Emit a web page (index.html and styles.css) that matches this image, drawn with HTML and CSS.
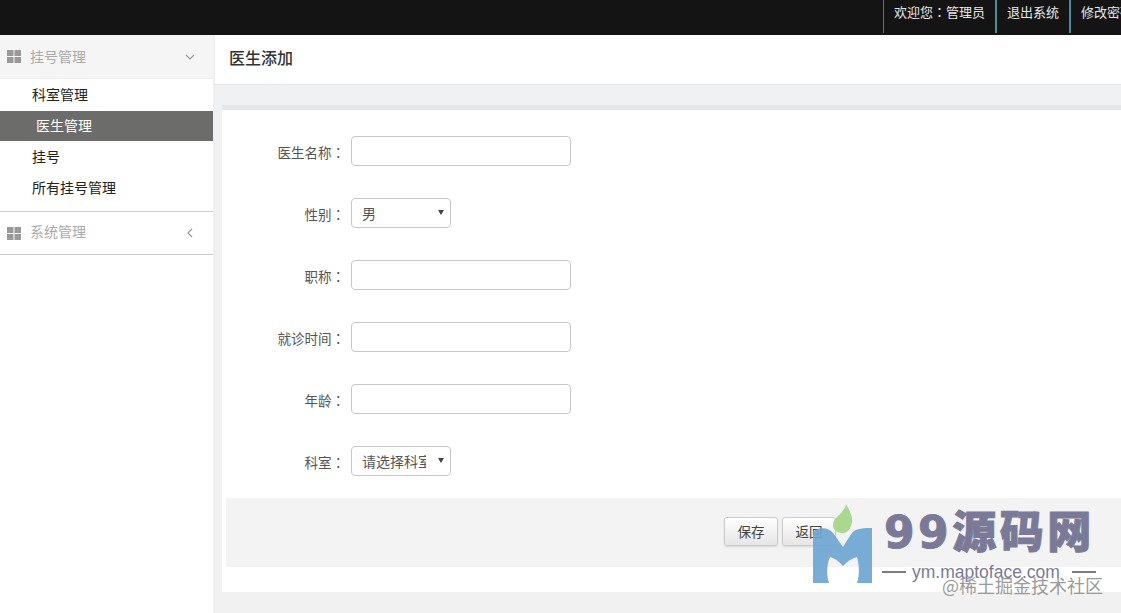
FILE: index.html
```html
<!DOCTYPE html>
<html lang="zh-CN">
<head>
<meta charset="utf-8">
<title>医生添加</title>
<link rel="stylesheet" href="styles.css">
</head>
<body>
<header class="topbar">
  <nav class="topnav">
    <a class="topnav-item">欢迎您<span class="colon" lang="zh-Hant">：</span>管理员</a>
    <a class="topnav-item topnav-item-thick">退出系统</a>
    <a class="topnav-item topnav-item-thick">修改密码</a>
  </nav>
</header>
<div class="layout">
  <aside class="sidebar">
    <div class="group-head group-head-open">
      <svg class="grid-icon" viewBox="0 0 14 13"><path d="M0 0h6.500v6H0zM7.500 0H14v6H7.500zM0 7h6.500v6H0zM7.500 7H14v6H7.500z"/></svg>
      <span class="group-title">挂号管理</span>
      <svg class="chev" viewBox="0 0 10 10"><path d="M1 3l4 4 4-4"/></svg>
    </div>
    <ul class="menu">
      <li class="menu-item">科室管理</li>
      <li class="menu-item menu-item-active">医生管理</li>
      <li class="menu-item">挂号</li>
      <li class="menu-item">所有挂号管理</li>
    </ul>
    <div class="group-head group-head-closed">
      <svg class="grid-icon" viewBox="0 0 14 13"><path d="M0 0h6.500v6H0zM7.500 0H14v6H7.500zM0 7h6.500v6H0zM7.500 7H14v6H7.500z"/></svg>
      <span class="group-title">系统管理</span>
      <svg class="chev" viewBox="0 0 10 10"><path d="M7 1L3 5l4 4"/></svg>
    </div>
  </aside>
  <main class="content">
    <h1 class="page-title">医生添加</h1>
    <div class="band"></div>
    <section class="panel">
      <form class="form">
        <div class="row"><label class="label">医生名称<span class="colon" lang="zh-Hant">：</span></label><input class="input" type="text"></div>
        <div class="row"><label class="label">性别<span class="colon" lang="zh-Hant">：</span></label><div class="select-wrap"><select class="select"><option>男</option><option>女</option></select></div></div>
        <div class="row"><label class="label">职称<span class="colon" lang="zh-Hant">：</span></label><input class="input" type="text"></div>
        <div class="row"><label class="label">就诊时间<span class="colon" lang="zh-Hant">：</span></label><input class="input" type="text"></div>
        <div class="row"><label class="label">年龄<span class="colon" lang="zh-Hant">：</span></label><input class="input" type="text"></div>
        <div class="row"><label class="label">科室<span class="colon" lang="zh-Hant">：</span></label><div class="select-wrap"><select class="select"><option>请选择科室</option></select></div></div>
      </form>
      <div class="actions">
        <button class="btn" type="button">保存</button>
        <button class="btn" type="button">返回</button>
      </div>
    </section>
  </main>
</div>
<div class="watermark">
  <svg class="wm-logo" viewBox="0 0 60 80">
    <path class="wm-leaf" d="M33 0C36 6 40 12 39 18C38 25 34 30 28 29C22 28 18 23 21 17C23 12 31 9 33 0Z"/>
    <path class="wm-m" d="M0 79V28C4 24 14 22 20 29C24 34 27 39 30 43C33 38 36 33 39 29C43 24 52 24 59 24V79H44C47 70 46 60 44 53C40 54 34 57 30 62C26 57 21 54 17 53C14 60 13 70 16 79Z"/>
  </svg>
  <div class="wm-name">99源码网</div>
  <div class="wm-url"><i class="wm-dash"></i><span>ym.maptoface.com</span><i class="wm-dash wm-dash-r"></i></div>
  <div class="wm-credit">@稀土掘金技术社区</div>
</div>
</body>
</html>
```

FILE: styles.css
```css
* { box-sizing: border-box; }
html, body { margin: 0; height: 100%; overflow: hidden; }
body {
  width: 1121px;
  height: 613px;
  position: relative;
  font-family: "Noto Sans CJK SC", "Liberation Sans", sans-serif;
  font-size: 14px;
  color: #555;
  background: #f1f1f1;
}
.colon { font-family: "Noto Sans CJK TC", sans-serif; }

.topbar { height: 35px; background: #141414; overflow: hidden; }
.topnav { display: flex; padding-left: 883px; width: 1300px; }
.topnav-item {
  height: 33px;
  line-height: 24px;
  padding: 0 10px;
  border-left: 1px solid #3f7f93;
  color: #e8e8e8;
  font-size: 13px;
  white-space: nowrap;
}
.topnav-item-thick { border-left: 2px solid #4a8ca0; }

.layout { display: flex; height: 578px; }
.sidebar {
  width: 215px;
  flex: none;
  background: #fff;
  border-right: 2px solid #eeeff1;
}
.group-head {
  height: 43px;
  display: flex;
  align-items: center;
  padding: 0 18px 0 7px;
  border-bottom: 1px solid #ccc;
  background: #fff;
}
.group-head-open { height: 44px; background: #f5f5f5; border-bottom-color: #eee; }
.grid-icon { width: 14px; height: 13px; fill: #999; flex: none; }
.group-title { margin: 0 0 2px 9px; color: #aaa; flex: 1; }
.group-head-closed .group-title { margin-bottom: 4px; }
.chev { width: 10px; height: 10px; fill: none; stroke: #999; stroke-width: 1.200; flex: none; }

.menu { list-style: none; margin: 0; padding: 0 0 8px; border-bottom: 1px solid #ccc; }
.menu-item { height: 31px; line-height: 31px; padding-left: 32px; color: #222; }
.menu-item:first-child { height: 32px; }
.menu-item-active { height: 30px; line-height: 29px; padding-left: 36px; background: #6c6c6a; color: #fff; }

.content { flex: 1; min-width: 0; }
.page-title {
  margin: 0;
  height: 50px;
  padding: 0 14px;
  line-height: 45px;
  font-size: 16px;
  font-weight: 500;
  color: #333;
  background: #fff;
  border-bottom: 1px solid #e5e5e5;
}
.band { height: 20px; background: #f0f1f3; }
.panel {
  margin-left: 7px;
  height: 487px;
  border-top: 5px solid #e6e7ea;
  background: #fff;
  padding-top: 26px;
}
.form { display: flex; flex-direction: column; gap: 32px; }
.row { display: flex; height: 30px; }
.label {
  width: 129px;
  flex: none;
  padding: 2px 6px 0 0;
  line-height: 28px;
  text-align: right;
  color: #555;
  font-size: 13.500px;
}
.input {
  width: 220px;
  height: 30px;
  border: 1px solid #c8c8c8;
  border-radius: 4px;
  background: #fff;
  outline: none;
}
.select-wrap { position: relative; width: 100px; height: 30px; }
.select-wrap::after {
  content: "";
  position: absolute;
  right: 7px;
  top: 12px;
  border-left: 3px solid transparent;
  border-right: 3px solid transparent;
  border-top: 5px solid #444;
}
.select {
  appearance: none;
  width: 100%;
  height: 100%;
  padding: 0 24px 0 10px;
  border: 1px solid #c8c8c8;
  border-radius: 4px;
  background: #fff;
  color: #555;
  font: inherit;
  font-size: 14px;
}
.actions {
  display: flex;
  justify-content: flex-end;
  align-items: center;
  gap: 4px;
  height: 69px;
  margin: 22px 0 0 4px;
  padding: 0 285px 3px 0;
  background: #f3f3f3;
}
.btn {
  width: 54px;
  height: 29px;
  padding: 0;
  border: 1px solid #ccc;
  border-radius: 3px;
  background: linear-gradient(#fff, #e6e6e6);
  box-shadow: 0 1px 2px rgba(0,0,0,.12);
  color: #444;
  font: inherit;
  font-size: 13.500px;
}

/* Watermark stamped over the screenshot */
.watermark { position: absolute; left: 813px; top: 504px; width: 300px; height: 100px; pointer-events: none; }
.wm-logo { position: absolute; left: 0; top: 0; width: 60px; height: 80px; }
.wm-leaf { fill: #a9d88e; }
.wm-m { fill: #6ea6d3; fill-opacity: .92; }
.wm-name {
  position: absolute;
  left: 71px;
  top: 0;
  font-family: "DejaVu Sans", "Noto Sans CJK SC", sans-serif;
  font-size: 44px;
  line-height: 58px;
  font-weight: 900;
  letter-spacing: 3.500px;
  -webkit-text-stroke: 1px #7a7a98;
  color: #7a7a98;
  white-space: nowrap;
}
.wm-url {
  position: absolute;
  left: 69px;
  top: 58px;
  display: flex;
  align-items: center;
  gap: 6px;
  font-family: "Liberation Sans", sans-serif;
  font-size: 17.500px;
  line-height: 20px;
  color: #7a7a98;
  white-space: nowrap;
}
.wm-dash { display: block; width: 24px; height: 2px; background: #7a7a98; }
.wm-dash-r { margin-left: 6px; }
.wm-credit {
  position: absolute;
  left: 129px;
  top: 70px;
  font-size: 18px;
  line-height: 22px;
  color: #9a9a9a;
  white-space: nowrap;
}
```
